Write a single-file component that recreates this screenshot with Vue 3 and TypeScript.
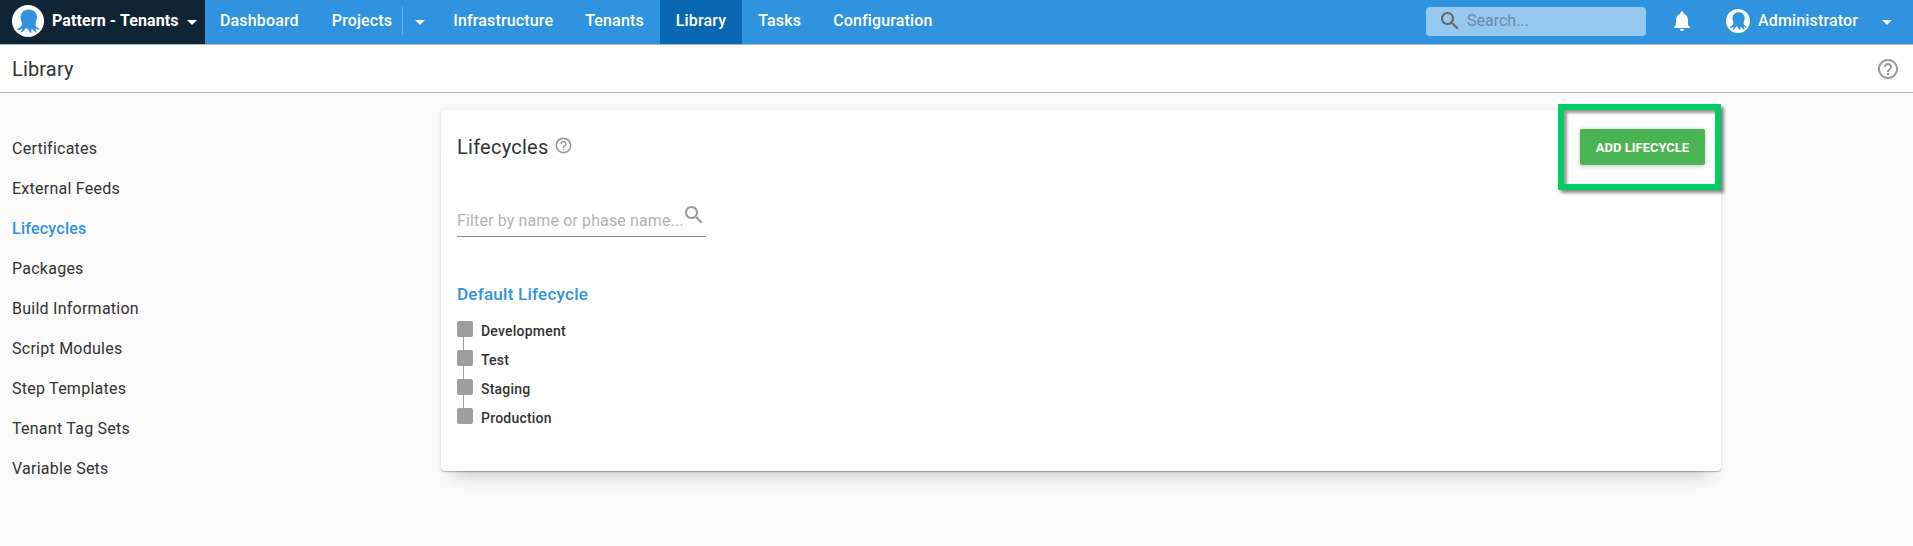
<script setup lang="ts">
interface NavItem {
  label: string
  active?: boolean
  menu?: boolean
}

const nav: NavItem[] = [
  { label: 'Dashboard' },
  { label: 'Projects', menu: true },
  { label: 'Infrastructure' },
  { label: 'Tenants' },
  { label: 'Library', active: true },
  { label: 'Tasks' },
  { label: 'Configuration' },
]

const sections: string[] = [
  'Certificates',
  'External Feeds',
  'Lifecycles',
  'Packages',
  'Build Information',
  'Script Modules',
  'Step Templates',
  'Tenant Tag Sets',
  'Variable Sets',
]
const current = 'Lifecycles'

const phases: string[] = ['Development', 'Test', 'Staging', 'Production']

const searchPath =
  'M15.5 14h-.79l-.28-.27C15.41 12.59 16 11.11 16 9.5 16 5.91 13.09 3 9.5 3S3 5.91 3 9.5 5.91 16 9.5 16c1.61 0 3.09-.59 4.23-1.57l.27.28v.79l5 4.99L20.49 19l-4.99-5zm-6 0C7.01 14 5 11.99 5 9.5S7.01 5 9.5 5 14 7.01 14 9.5 11.99 14 9.5 14z'
const helpPath =
  'M11 18h2v-2h-2v2zm1-16C6.48 2 2 6.48 2 12s4.48 10 10 10 10-4.48 10-10S17.52 2 12 2zm0 18c-4.41 0-8-3.59-8-8s3.59-8 8-8 8 3.59 8 8-3.59 8-8 8zm0-14c-2.21 0-4 1.79-4 4h2c0-1.1.9-2 2-2s2 .9 2 2c0 2-3 1.75-3 5h2c0-2.25 3-2.5 3-5 0-2.21-1.79-4-4-4z'
const bellPath =
  'M12 22c1.1 0 2-.9 2-2h-4c0 1.1.89 2 2 2zm6-6v-5c0-3.07-1.64-5.64-4.5-6.32V4c0-.83-.67-1.5-1.5-1.5s-1.5.67-1.5 1.5v.68C7.63 5.36 6 7.92 6 11v5l-2 2v1h16v-1l-2-2z'
const octopusPath =
  'M16.8 4.400C11.800 4.400 8.600 8 8.600 12.300C8.600 14.600 9.700 16.400 9.900 18.400C10.100 20.800 8.300 22.500 5.500 23.600C4.600 24 5 25.100 6 25.100C7.600 25.100 9 24.500 10.300 23.700C9.900 25 9.200 25.800 8.900 26.600C8.700 27.500 9.900 27.900 10.600 27.100C11.800 25.800 12.600 24.800 13.500 23.600C14 23 14.800 23 15.300 23.600C16.300 25 17.100 26.400 18 27.500C18.600 28.100 19.400 27.800 19.400 26.900C19.400 25.600 19.400 24.600 19.700 23.600C20.900 24.800 22 26.100 23.300 27C24 27.400 24.600 26.900 24.400 26.100C24.100 25 23.700 24.200 23.500 23.300C24.600 24.200 25.500 24.700 26.600 24.900C27.500 25 27.800 24.100 27 23.600C24.300 22 23.100 20.400 23.500 18.400C23.900 16.400 25 14.700 25 12.300C25 8 21.800 4.400 16.800 4.400Z'
</script>

<template>
  <div class="page">
    <header class="topbar">
      <div class="space">
        <svg class="space-logo" viewBox="0 0 32 32">
          <circle cx="16" cy="16" r="16" fill="#fff" />
          <path :d="octopusPath" fill="#2f93e0" />
        </svg>
        <span class="space-name">Pattern - Tenants</span>
        <i class="caret"></i>
      </div>
      <nav class="nav">
        <a v-for="item in nav" :key="item.label" class="nav-item" :class="{ active: item.active, split: item.menu }">
          <span>{{ item.label }}</span>
          <span v-if="item.menu" class="nav-menu"><i class="caret"></i></span>
        </a>
      </nav>
      <div class="tools">
        <div class="search">
          <svg class="icon" viewBox="0 0 24 24"><path :d="searchPath" /></svg>
          <span>Search...</span>
        </div>
        <svg class="icon bell" viewBox="0 0 24 24"><path :d="bellPath" /></svg>
        <svg class="avatar" viewBox="0 0 32 32">
          <circle cx="16" cy="16" r="16" fill="#fff" />
          <path :d="octopusPath" fill="#2f93e0" />
        </svg>
        <span class="user">Administrator</span>
        <i class="caret"></i>
      </div>
    </header>

    <div class="titlebar">
      <h1>Library</h1>
      <svg class="icon" viewBox="0 0 24 24"><path :d="helpPath" /></svg>
    </div>

    <div class="body">
      <aside class="sidebar">
        <a v-for="name in sections" :key="name" :class="{ current: name === current }">{{ name }}</a>
      </aside>

      <main class="card">
        <div class="card-head">
          <h2>Lifecycles</h2>
          <svg class="help" viewBox="0 0 24 24"><path :d="helpPath" /></svg>
          <div class="highlight">
            <button class="add">ADD LIFECYCLE</button>
          </div>
        </div>
        <div class="filter">
          <span>Filter by name or phase name...</span>
          <svg class="icon" viewBox="0 0 24 24"><path :d="searchPath" /></svg>
        </div>
        <h3>Default Lifecycle</h3>
        <ul class="phases">
          <li v-for="phase in phases" :key="phase"><i class="box"></i><span>{{ phase }}</span></li>
        </ul>
      </main>
    </div>
  </div>
</template>

<style>
body {
  margin: 0;
  background: #fafafa;
}
</style>

<style scoped>
.page {
  height: 546px;
  overflow: hidden;
  background: #fafafa;
  color: #333;
  font-family: Roboto, 'Liberation Sans', sans-serif;
  font-size: 16px;
}
.icon {
  width: 24px;
  height: 24px;
  flex: none;
}
.caret {
  flex: none;
  width: 0;
  height: 0;
  border: 5px solid transparent;
  border-top-color: #fff;
  border-bottom: 0;
}
.topbar {
  display: flex;
  height: 44px;
  background: #2f93e0;
  border-bottom: 1px solid #b4b4b4;
  color: #fff;
  font-weight: 500;
  letter-spacing: 0.15px;
}
.space {
  display: flex;
  align-items: center;
  box-sizing: border-box;
  width: 205px;
  padding: 0 8px 2px 12px;
  background: #0f2535;
}
.space-logo {
  width: 32px;
  height: 32px;
  margin-right: 8px;
}
.space-name {
  width: 127px;
  margin-right: 8px;
  padding-bottom: 1px;
  font-weight: 700;
  letter-spacing: 0.1px;
  white-space: nowrap;
}
.space .caret,
.tools .caret {
  margin-top: 2px;
}
.nav {
  display: flex;
}
.nav-item {
  display: flex;
  align-items: center;
  box-sizing: border-box;
  padding: 0 16px 3px;
}
.nav-item:first-child {
  padding: 0 17px 3px 15px;
}
.nav-item.active {
  background: #0a67b1;
}
.nav-menu {
  display: flex;
  align-items: center;
  height: 28px;
  margin: 0 -4px 0 10px;
  padding-left: 12px;
  border-left: 1px solid #6db3e9;
}
.nav-menu .caret {
  margin-top: 3px;
}
.tools {
  display: flex;
  align-items: center;
  margin-left: auto;
  padding: 0 21px 2px 0;
}
.search {
  display: flex;
  align-items: center;
  box-sizing: border-box;
  width: 220px;
  height: 29px;
  padding-left: 12px;
  border-radius: 4px;
  background: #97c8f0;
  color: #668aa8;
  font-weight: 400;
  letter-spacing: 0;
}
.search span,
.user {
  padding-bottom: 1px;
}
.search .icon {
  margin-right: 5px;
  fill: #666;
}
.bell {
  margin: -1px 32px 0 24px;
  fill: #fff;
}
.avatar {
  width: 24px;
  height: 24px;
  margin-right: 8px;
}
.user {
  width: 100px;
  margin-right: 24px;
}
.titlebar {
  display: flex;
  align-items: center;
  justify-content: space-between;
  height: 47px;
  padding: 0 13px 0 12px;
  background: #fff;
  border-bottom: 1px solid #b4b4b4;
}
.titlebar .icon {
  fill: #999;
}
h1,
h2,
h3 {
  margin: 0;
  font-weight: 400;
}
h1 {
  font-size: 20px;
  letter-spacing: 0.15px;
}
.body {
  display: flex;
  align-items: flex-start;
}
.sidebar {
  display: flex;
  flex-direction: column;
  width: 429px;
  padding: 36px 0 0 12px;
  letter-spacing: 0.25px;
}
.sidebar a {
  height: 40px;
  line-height: 40px;
}
.sidebar .current {
  color: #2f93e0;
  font-weight: 500;
}
.card {
  box-sizing: border-box;
  width: 1280px;
  height: 361px;
  margin-top: 17px;
  padding: 0 0 0 16px;
  border-radius: 4px;
  background: #fff;
  box-shadow:
    0 1px 1px rgba(0, 0, 0, 0.25),
    0 0 4px rgba(0, 0, 0, 0.08),
    0 16px 16px -12px rgba(0, 0, 0, 0.2);
}
.card-head {
  display: flex;
  align-items: center;
  height: 74px;
}
h2 {
  font-size: 20px;
  letter-spacing: 0.25px;
}
.help {
  width: 19px;
  height: 19px;
  margin: -4px 0 0 5px;
  fill: #999;
}
.highlight {
  box-sizing: border-box;
  width: 163px;
  height: 86px;
  margin: -6px 0 -6px auto;
  padding: 19px 0 0 16px;
  border: 6px solid #00cd66;
  box-shadow:
    3px 3px 3px rgba(0, 0, 0, 0.45),
    inset 3px 3px 3px rgba(0, 0, 0, 0.4);
}
.add {
  width: 125px;
  height: 36px;
  padding: 0;
  border: 0;
  border-radius: 2px;
  background: #4ab352;
  box-shadow: 0 1px 5px rgba(0, 0, 0, 0.25);
  color: #fff;
  font: 700 13px Roboto, sans-serif;
}
.filter {
  display: flex;
  box-sizing: border-box;
  width: 249px;
  height: 43px;
  margin-top: 10px;
  padding-top: 9px;
  border-bottom: 1px solid #8c8c8c;
  color: #b3b3b3;
  white-space: nowrap;
}
.filter span {
  width: 225px;
  padding-top: 8px;
  letter-spacing: 0.13px;
}
.filter .icon {
  fill: #999;
}
h3 {
  margin-top: 46px;
  color: #2f93e0;
  font-size: 17px;
  font-weight: 500;
  line-height: 22px;
  letter-spacing: 0.25px;
}
.phases {
  display: flex;
  flex-direction: column;
  gap: 13px;
  margin: 16px 0 0;
  padding: 0;
  list-style: none;
  font-size: 14px;
  font-weight: 500;
  letter-spacing: 0.22px;
}
.phases li {
  display: flex;
  position: relative;
  height: 16px;
  line-height: 20px;
}
.phases li + li::before {
  content: '';
  position: absolute;
  top: -13px;
  left: 6px;
  width: 1px;
  height: 13px;
  background: #9e9e9e;
}
.box {
  width: 16px;
  height: 16px;
  margin-right: 8px;
  border-radius: 2px;
  background: #9e9e9e;
}
</style>
